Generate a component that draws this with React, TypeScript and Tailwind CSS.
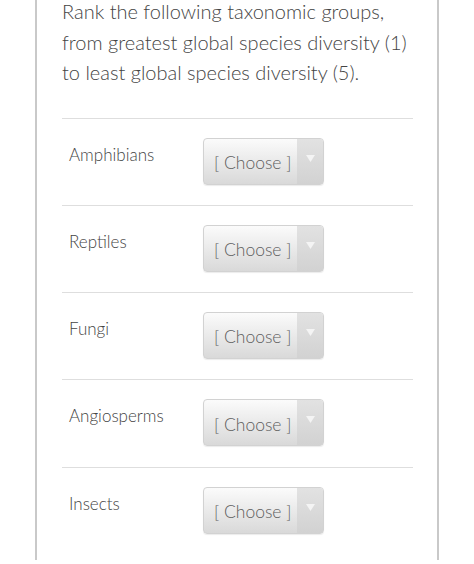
const groups = ["Amphibians", "Reptiles", "Fungi", "Angiosperms", "Insects"];

function ChooseSelect() {
  return (
    <div className="flex h-[47px] w-[121px] overflow-hidden rounded-[4px] border border-[#d2d2d2] bg-gradient-to-b from-[#fbfbfb] to-[#d9d9d9] shadow-[0_1px_1px_rgba(0,0,0,0.08)]">
      <div className="flex flex-1 items-center pl-[10px] pt-[3px] text-[17.5px] font-light leading-none text-[#5e5e5e]">
        [ Choose ]
      </div>
      <div className="flex w-[26px] items-start justify-center bg-gradient-to-b from-[#e2e2e2] to-[#d2d2d2] pt-[16px]">
        <svg width="9" height="7" viewBox="0 0 9 7">
          <path d="M0 0 L9 0 L4.5 7 Z" fill="#f4f4f4" />
        </svg>
      </div>
    </div>
  );
}

export default function App() {
  return (
    <div className="h-[564px] w-[474px] overflow-hidden bg-white font-['Lato','Liberation_Sans',sans-serif]">
      <div className="ml-[35px] h-full w-[404px] border-x-2 border-[#c9c9c9] pl-[25px] pr-[24px]">
        <p className="-mr-[20px] -mt-[4px] text-[20px] font-light leading-[30.5px] text-[#444444]">
          Rank the following taxonomic groups,
          <br />
          from greatest global species diversity (1)
          <br />
          to least global species diversity (5).
        </p>
        <div className="mt-[30px]">
          {groups.map((g) => (
            <div key={g} className="flex h-[87.25px] items-start border-t border-[#dedede] pl-[7px]">
              <div className="mt-[24px] w-[134px] text-[17px] font-light leading-[24px] text-[#444444]">{g}</div>
              <div className="mt-[19px]">
                <ChooseSelect />
              </div>
            </div>
          ))}
        </div>
      </div>
    </div>
  );
}
